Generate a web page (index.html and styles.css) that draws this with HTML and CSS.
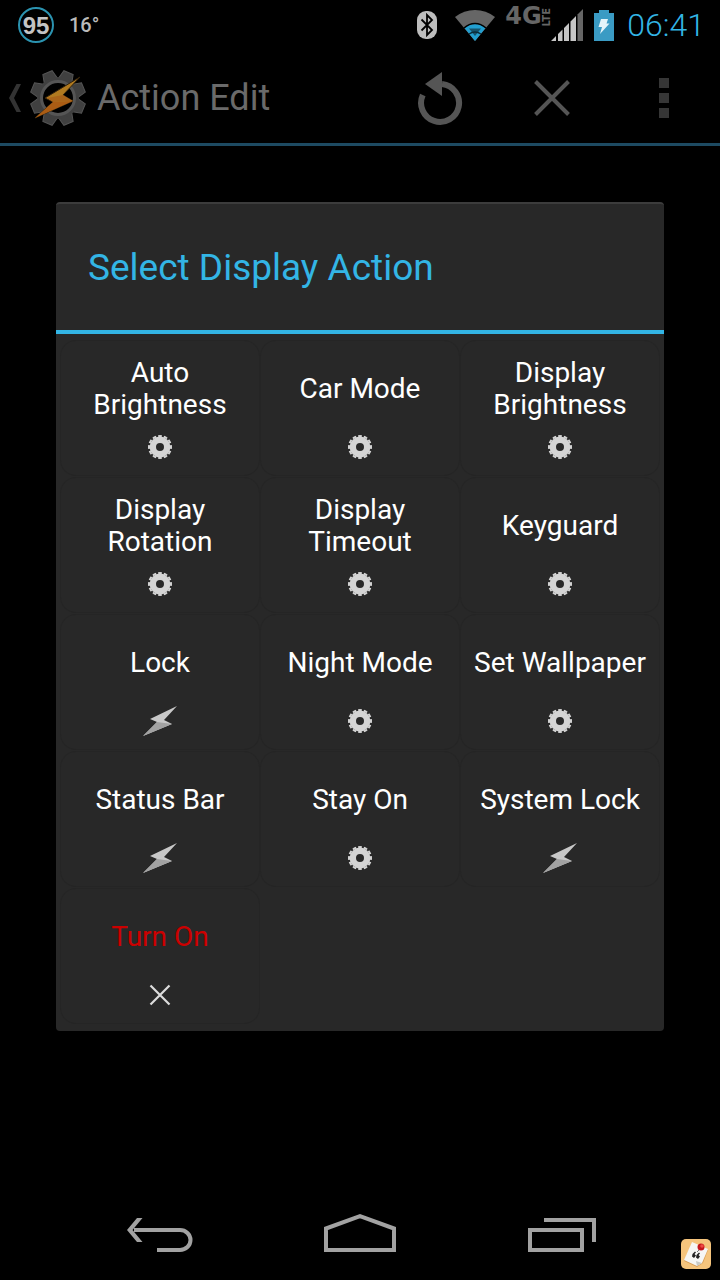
FILE: index.html
```
<!DOCTYPE html>
<html lang="en">

<head>
    <meta charset="UTF-8">
    <meta name="viewport" content="width=device-width, initial-scale=1.0">
    <title>Action Edit</title>
    <link rel="stylesheet" href="styles.css">
</head>

<body>
    <!-- shared icons -->
    <svg class="sprite" aria-hidden="true">
        <symbol id="gear" viewBox="0 0 24 24">
            <circle cx="12" cy="12" r="7.200" fill="none" stroke="#d4d4d4" stroke-width="6.400" />
            <circle cx="12" cy="12" r="11" fill="none" stroke="#d4d4d4" stroke-width="2" pathLength="48"
                stroke-dasharray="2.600 1.400" stroke-dashoffset="1.300" />
        </symbol>
        <symbol id="bolt" viewBox="0 0 34 30">
            <path d="M34 0 7 13 14 16 0 30 29 18 21 14Z" fill="#c8c8c8" />
            <path d="M14 16 29 18 0 30Z" fill="#a2a2a2" />
        </symbol>
        <symbol id="cross" viewBox="0 0 22 22">
            <path d="M1.500 1.500 20.500 20.500M20.500 1.500 1.500 20.500" fill="none" stroke="#dcdcdc" stroke-width="2.200" />
        </symbol>
    </svg>

    <header class="status">
        <span class="battery-level">95</span>
        <span class="temp">16°</span>
        <div class="status-icons">
            <svg class="bluetooth" width="20" height="28" viewBox="0 0 20 28">
                <rect width="20" height="28" rx="9" fill="#bdbdbd" />
                <path d="M4.500 8.500 15 19 10 24V4L15 9 4.500 19.500" fill="none" stroke="#000" stroke-width="1.800" />
            </svg>
            <svg class="wifi" width="40" height="31" viewBox="0 0 40 31">
                <path d="M20 31 0 7Q9 0 20 0T40 7Z" fill="#666" />
                <path d="M20 31 9.500 18Q14 14 20 14T30.500 18Z" fill="#229fd0" />
                <path d="M9 18Q14 13.500 20 13.500T31 18" fill="none" stroke="#000" stroke-width="1.500" />
                <path d="M14 18.500H26L20 26Z" fill="#17536b" />
                <path d="M14 24Q20 20 26 24" fill="none" stroke="#0a2c3a" stroke-width="1.500" />
            </svg>
            <div class="network">
                <span class="network-4g">4G</span>
                <span class="network-lte">LTE</span>
            </div>
            <svg class="signal" width="32" height="32" viewBox="0 0 32 32">
                <path d="M0 32 5 27V32ZM7 32V25L11.500 20.500V32ZM13 32V19L18 14V32ZM19.500 32V12.500L25 7V32Z" fill="#c6c6c6" />
                <path d="M26.500 32V5.500L32 0V32Z" fill="#666" />
            </svg>
            <svg class="battery" width="20" height="31" viewBox="0 0 20 31">
                <path d="M5 0H15V3H20V31H0V3H5Z" fill="#3a9bc4" />
                <path d="M7 9H14L12.500 13.500H15.500L6 24 8 17H4.500Z" fill="#e4f4fa" />
            </svg>
        </div>
        <time class="clock">06:41</time>
    </header>

    <div class="action-bar">
        <a class="up" href="#" aria-label="Navigate up">
            <svg width="12" height="30" viewBox="0 0 12 30">
                <path d="M7.500 1H12L5 15 12 29H7.500L0 15Z" fill="#333" />
            </svg>
            <svg class="logo" width="58" height="58" viewBox="0 0 58 58">
                <g fill="#404040" stroke="#555" stroke-width="1">
                    <path id="tooth" d="M22 10 24 1.500H34L36 10Z" transform="rotate(22.500 29 29)" />
                    <use href="#tooth" transform="rotate(45 29 29)" />
                    <use href="#tooth" transform="rotate(90 29 29)" />
                    <use href="#tooth" transform="rotate(135 29 29)" />
                    <use href="#tooth" transform="rotate(180 29 29)" />
                    <use href="#tooth" transform="rotate(225 29 29)" />
                    <use href="#tooth" transform="rotate(270 29 29)" />
                    <use href="#tooth" transform="rotate(315 29 29)" />
                </g>
                <circle cx="29" cy="29" r="21" fill="#404040" />
                <circle cx="29" cy="29" r="16.500" fill="#000" stroke="#555" stroke-width="3" />
                <path d="M51 8 16 29 24 33 6 49 44 32 34 26Z" fill="#b07a20" stroke="#33230c" stroke-width="1" />
                <path d="M24 33 44 32 6 49Z" fill="#aa5c14" />
                <path d="M34 26 44 32 24 33 18 29Z" fill="#a9641a" />
            </svg>
        </a>
        <h1 class="bar-title">Action Edit</h1>
        <div class="bar-actions">
            <button class="bar-btn" type="button" aria-label="Revert">
                <svg width="48" height="56" viewBox="0 0 48 56">
                    <path d="M6.800 25A19 19 0 1 0 26 14" fill="none" stroke="#555" stroke-width="6" />
                    <path d="M26 2V26L9 14Z" fill="#555" />
                </svg>
            </button>
            <button class="bar-btn" type="button" aria-label="Discard">
                <svg width="36" height="36" viewBox="0 0 36 36">
                    <path d="M1.500 1.500 34.500 34.500M34.500 1.500 1.500 34.500" fill="none" stroke="#555" stroke-width="4" />
                </svg>
            </button>
            <button class="bar-btn" type="button" aria-label="More options">
                <svg width="10" height="40" viewBox="0 0 10 40">
                    <path d="M0 0H10V10H0ZM0 15H10V25H0ZM0 30H10V40H0Z" fill="#363636" />
                </svg>
            </button>
        </div>
    </div>

    <main class="content">
        <section class="dialog" role="dialog" aria-labelledby="dialog-title">
            <h2 class="dialog-title" id="dialog-title">Select Display Action</h2>
            <div class="grid">
                <button class="tile" type="button">
                    <span class="label">Auto<br>Brightness</span>
                    <svg class="icon icon-gear"><use href="#gear" /></svg>
                </button>
                <button class="tile" type="button">
                    <span class="label">Car Mode</span>
                    <svg class="icon icon-gear"><use href="#gear" /></svg>
                </button>
                <button class="tile" type="button">
                    <span class="label">Display<br>Brightness</span>
                    <svg class="icon icon-gear"><use href="#gear" /></svg>
                </button>
                <button class="tile" type="button">
                    <span class="label">Display<br>Rotation</span>
                    <svg class="icon icon-gear"><use href="#gear" /></svg>
                </button>
                <button class="tile" type="button">
                    <span class="label">Display<br>Timeout</span>
                    <svg class="icon icon-gear"><use href="#gear" /></svg>
                </button>
                <button class="tile" type="button">
                    <span class="label">Keyguard</span>
                    <svg class="icon icon-gear"><use href="#gear" /></svg>
                </button>
                <button class="tile" type="button">
                    <span class="label">Lock</span>
                    <svg class="icon icon-bolt"><use href="#bolt" /></svg>
                </button>
                <button class="tile" type="button">
                    <span class="label">Night Mode</span>
                    <svg class="icon icon-gear"><use href="#gear" /></svg>
                </button>
                <button class="tile" type="button">
                    <span class="label">Set Wallpaper</span>
                    <svg class="icon icon-gear"><use href="#gear" /></svg>
                </button>
                <button class="tile" type="button">
                    <span class="label">Status Bar</span>
                    <svg class="icon icon-bolt"><use href="#bolt" /></svg>
                </button>
                <button class="tile" type="button">
                    <span class="label">Stay On</span>
                    <svg class="icon icon-gear"><use href="#gear" /></svg>
                </button>
                <button class="tile" type="button">
                    <span class="label">System Lock</span>
                    <svg class="icon icon-bolt"><use href="#bolt" /></svg>
                </button>
                <button class="tile unavailable" type="button">
                    <span class="label">Turn On</span>
                    <svg class="icon icon-cross"><use href="#cross" /></svg>
                </button>
            </div>
        </section>
    </main>

    <nav class="nav">
        <button class="nav-btn" type="button" aria-label="Back">
            <svg width="80" height="48" viewBox="0 0 80 48">
                <path d="M14 22H60A10.500 10 0 0 1 60 42H37" fill="none" stroke="#a2a2a2" stroke-width="4" />
                <path d="M17 10H22.500L12.500 22 22.500 34H17L7 22Z" fill="#a2a2a2" />
            </svg>
        </button>
        <button class="nav-btn" type="button" aria-label="Home">
            <svg width="80" height="48" viewBox="0 0 80 48">
                <path d="M6 42V20.500L40 8.200 74 20.500V42Z" fill="none" stroke="#a2a2a2" stroke-width="4" />
            </svg>
        </button>
        <button class="nav-btn" type="button" aria-label="Recent apps">
            <svg width="80" height="48" viewBox="0 0 80 48">
                <path d="M10 22H62V42H10ZM24 12H74V34" fill="none" stroke="#a2a2a2" stroke-width="4" />
            </svg>
        </button>
    </nav>

    <!-- sticky note badge in the corner -->
    <svg class="note" width="30" height="30" viewBox="0 0 30 30">
        <rect width="30" height="30" rx="5" fill="#f5c47c" />
        <path d="M11 4 27 11 22 24 16 28 3 22Z" fill="#d99d55" />
        <path d="M11 3 27 10 21 24 16 27 3 21Z" fill="#f6f6f4" />
        <path d="M21 24 15 22 16 27Z" fill="#c9c9c4" />
        <path d="M11.500 15 14 12.500 15 13.500 13.500 15 15 16.500 13 19 11 17.500ZM15.500 16 18 13.500 19 14.500 17.500 16 19 17.500 17 20 15 18.500Z"
            fill="#222" />
        <path d="M18 11 16 13" stroke="#777" stroke-width="1" />
        <circle cx="20" cy="8" r="3.500" fill="#c4161c" />
        <circle cx="21" cy="7" r="1.800" fill="#ee4a44" />
    </svg>
</body>

</html>
```
FILE: styles.css
```
* {
    box-sizing: border-box;
}

body,
h1,
h2,
button {
    margin: 0;
    padding: 0;
}

body {
    min-height: 100vh;
    display: flex;
    flex-direction: column;
    position: relative;
    background-color: #000;
    font-family: Roboto, 'Noto Sans', sans-serif;
}

button {
    background: none;
    border: none;
    font-family: inherit;
    cursor: pointer;
}

svg {
    display: block;
    flex-shrink: 0;
}

.sprite {
    position: absolute;
    width: 0;
    height: 0;
}

/* status bar */
.status {
    height: 50px;
    padding: 0 15px 0 18px;
    display: flex;
    align-items: center;
}

.battery-level {
    width: 36px;
    height: 36px;
    border: 2px solid #2b93b0;
    border-radius: 50%;
    color: #c4c4c4;
    font-family: 'Liberation Sans', sans-serif;
    font-size: 24px;
    font-weight: bold;
    line-height: 33px;
    text-align: center;
}

.temp {
    margin-left: 15px;
    color: #bababa;
    font-size: 20px;
    font-weight: 500;
}

.status-icons {
    margin-left: auto;
    display: flex;
    align-items: center;
}

.wifi {
    margin-left: 18px;
}

.network {
    width: 45px;
    height: 34px;
    margin-left: 10px;
    display: flex;
    align-items: flex-start;
    color: #666;
    font-family: 'DejaVu Sans', sans-serif;
    font-weight: bold;
}

.network-4g {
    font-size: 24px;
    line-height: 17px;
}

.network-lte {
    font-size: 10px;
    line-height: 9px;
    writing-mode: vertical-rl;
    transform: rotate(180deg);
}

.signal {
    margin-left: 1px;
}

.battery {
    margin-left: 11px;
}

.clock {
    margin-left: 13px;
    color: #33b5e5;
    font-size: 32px;
    font-weight: 300;
}

/* action bar */
.action-bar {
    height: 96px;
    padding: 3px 0 0 9px;
    display: flex;
    align-items: center;
    border-bottom: 3px solid #1d4a62;
}

.up {
    display: flex;
    align-items: center;
    gap: 8px;
}

.bar-title {
    margin-left: 10px;
    color: #6a6a6a;
    font-size: 36px;
    font-weight: 400;
    line-height: 52px;
}

.bar-actions {
    height: 100%;
    margin-left: auto;
    display: flex;
}

.bar-btn {
    width: 112px;
    display: flex;
    align-items: center;
    justify-content: center;
}

/* dialog */
.content {
    flex: 1;
    padding: 56px;
}

.dialog {
    background-color: #282828;
    border-top: 2px solid #3c3c3c;
    border-radius: 4px;
}

.dialog-title {
    padding: 1px 32px 0;
    border-bottom: 4px solid #33b5e5;
    color: #33b5e5;
    font-size: 37px;
    font-weight: 400;
    line-height: 125px;
}

.grid {
    padding: 6px 4px 7px;
    display: grid;
    grid-template-columns: repeat(3, 1fr);
    row-gap: 1px;
}

.tile {
    padding: 6px 0 14px;
    display: flex;
    flex-direction: column;
    align-items: center;
    border-radius: 16px;
    box-shadow: inset 0 0 0 1px #252525;
    color: #fff;
    font-size: 28px;
    line-height: 32px;
}

.tile:hover {
    background-color: #303030;
}

.label {
    min-height: 86px;
    display: flex;
    align-items: center;
}

.icon {
    height: 30px;
}

.icon-gear {
    width: 24px;
    padding: 3px 0;
}

.icon-bolt {
    width: 34px;
}

.icon-cross {
    width: 22px;
    padding: 4px 0;
}

.unavailable {
    color: #c00;
}

/* navigation bar */
.nav {
    height: 96px;
    padding: 0 60px;
    display: grid;
    grid-template-columns: repeat(3, 1fr);
}

.nav-btn {
    display: flex;
    align-items: center;
    justify-content: center;
}

.note {
    position: absolute;
    right: 9px;
    bottom: 11px;
}
```
